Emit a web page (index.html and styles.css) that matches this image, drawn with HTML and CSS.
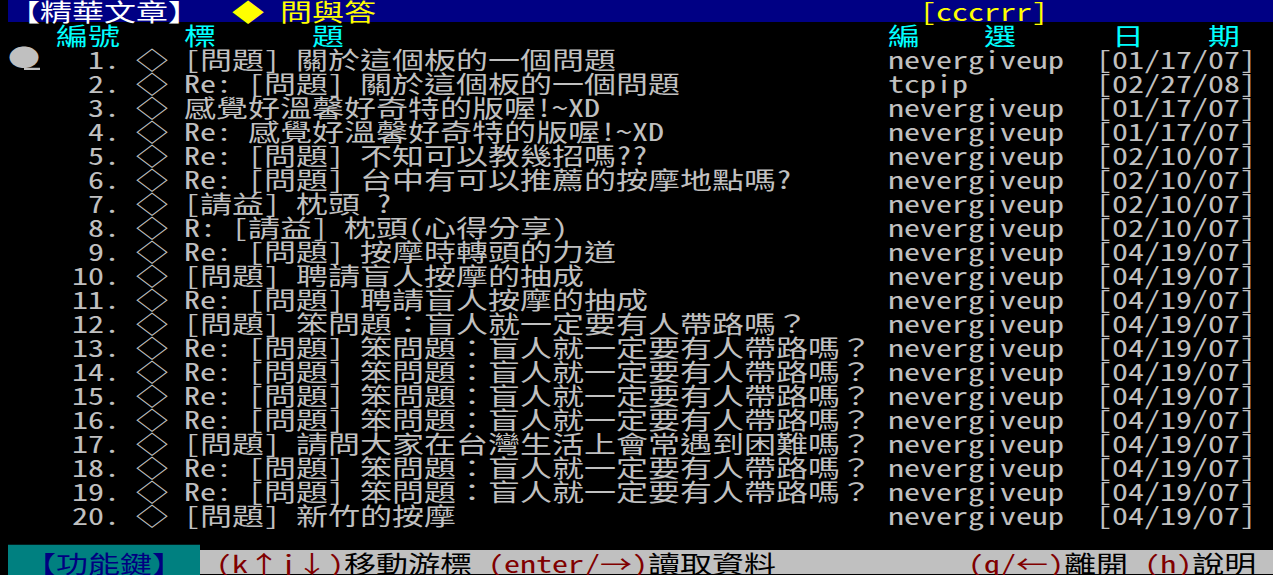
FILE: index.html
```html
<!DOCTYPE html>
<html lang="zh-Hant">
<head>
<meta charset="utf-8">
<title>精華文章 問與答</title>
<link rel="stylesheet" href="styles.css">
</head>
<body>
<div class="term">
  <div class="screen">
    <div class="row bar"><span class="white">【精華文章】</span>  <span class="yellow">◆ 問與答</span>                                  <span class="yellow">[cccrrr]</span></div>
    <div class="row head">   編號    標      題                                  編    選      日    期</div>

    <div class="row item"><span class="num"><span class="cur">●</span>   1. ◇ </span><span>[問題] 關於這個板的一個問題</span><span>nevergiveup</span><span>[01/17/07]</span></div>
    <div class="row item"><span class="num">     2. ◇ </span><span>Re: [問題] 關於這個板的一個問題</span><span>tcpip</span><span>[02/27/08]</span></div>
    <div class="row item"><span class="num">     3. ◇ </span><span>感覺好溫馨好奇特的版喔!~XD</span><span>nevergiveup</span><span>[01/17/07]</span></div>
    <div class="row item"><span class="num">     4. ◇ </span><span>Re: 感覺好溫馨好奇特的版喔!~XD</span><span>nevergiveup</span><span>[01/17/07]</span></div>
    <div class="row item"><span class="num">     5. ◇ </span><span>Re: [問題] 不知可以教幾招嗎??</span><span>nevergiveup</span><span>[02/10/07]</span></div>
    <div class="row item"><span class="num">     6. ◇ </span><span>Re: [問題] 台中有可以推薦的按摩地點嗎?</span><span>nevergiveup</span><span>[02/10/07]</span></div>
    <div class="row item"><span class="num">     7. ◇ </span><span>[請益] 枕頭 ?</span><span>nevergiveup</span><span>[02/10/07]</span></div>
    <div class="row item"><span class="num">     8. ◇ </span><span>R: [請益] 枕頭(心得分享)</span><span>nevergiveup</span><span>[02/10/07]</span></div>
    <div class="row item"><span class="num">     9. ◇ </span><span>Re: [問題] 按摩時轉頭的力道</span><span>nevergiveup</span><span>[04/19/07]</span></div>
    <div class="row item"><span class="num">    10. ◇ </span><span>[問題] 聘請盲人按摩的抽成</span><span>nevergiveup</span><span>[04/19/07]</span></div>
    <div class="row item"><span class="num">    11. ◇ </span><span>Re: [問題] 聘請盲人按摩的抽成</span><span>nevergiveup</span><span>[04/19/07]</span></div>
    <div class="row item"><span class="num">    12. ◇ </span><span>[問題] 笨問題：盲人就一定要有人帶路嗎？</span><span>nevergiveup</span><span>[04/19/07]</span></div>
    <div class="row item"><span class="num">    13. ◇ </span><span>Re: [問題] 笨問題：盲人就一定要有人帶路嗎？</span><span>nevergiveup</span><span>[04/19/07]</span></div>
    <div class="row item"><span class="num">    14. ◇ </span><span>Re: [問題] 笨問題：盲人就一定要有人帶路嗎？</span><span>nevergiveup</span><span>[04/19/07]</span></div>
    <div class="row item"><span class="num">    15. ◇ </span><span>Re: [問題] 笨問題：盲人就一定要有人帶路嗎？</span><span>nevergiveup</span><span>[04/19/07]</span></div>
    <div class="row item"><span class="num">    16. ◇ </span><span>Re: [問題] 笨問題：盲人就一定要有人帶路嗎？</span><span>nevergiveup</span><span>[04/19/07]</span></div>
    <div class="row item"><span class="num">    17. ◇ </span><span>[問題] 請問大家在台灣生活上會常遇到困難嗎？</span><span>nevergiveup</span><span>[04/19/07]</span></div>
    <div class="row item"><span class="num">    18. ◇ </span><span>Re: [問題] 笨問題：盲人就一定要有人帶路嗎？</span><span>nevergiveup</span><span>[04/19/07]</span></div>
    <div class="row item"><span class="num">    19. ◇ </span><span>Re: [問題] 笨問題：盲人就一定要有人帶路嗎？</span><span>nevergiveup</span><span>[04/19/07]</span></div>
    <div class="row item"><span class="num">    20. ◇ </span><span>[問題] 新竹的按摩</span><span>nevergiveup</span><span>[04/19/07]</span></div>

    <div class="row"> </div>
    <div class="row status"><span class="fkey"> 【功能鍵】 </span> <span class="key">(k↑j↓)</span>移動游標 <span class="key">(enter/→)</span>讀取資料            <span class="key">(q/←)</span>離開 <span class="key">(h)</span>說明</div>
  </div>
</div>
</body>
</html>
```

FILE: styles.css
```css
html, body {
  margin: 0;
  padding: 0;
  background: #000;
}

.term {
  height: 575px;
  overflow: hidden;
  padding-left: 8px;
}

.screen {
  width: 1280px;
  margin-top: -2px;
  transform: scaleY(0.75);
  transform-origin: 0 0;
  font-family: "Noto Sans Mono CJK TC", "Noto Sans CJK TC", monospace;
  font-size: 32px;
  color: #c0c0c0;
}

.row {
  height: 32px;
  line-height: 32px;
  white-space: pre;
}

.bar {
  background: #000084;
}

.white { color: #ffffff; }
.yellow { color: #ffff00; }

.head {
  color: #00ffff;
}

.item {
  display: grid;
  grid-template-columns: 176px 704px 208px 192px;
}

.cur {
  display: inline-block;
  width: 32px;
  height: 32px;
  line-height: 26px;
  vertical-align: top;
  background: linear-gradient(#c0c0c0, #c0c0c0) 16px 100% / 16px 3px no-repeat;
}

.status {
  background: #c0c0c0;
  color: #000;
}

.fkey {
  background: #008080;
  color: #000080;
}

.key {
  color: #800000;
}
```
